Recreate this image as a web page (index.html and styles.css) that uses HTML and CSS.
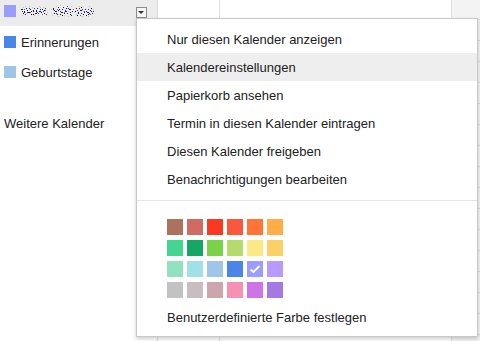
FILE: index.html
```html
<!DOCTYPE html>
<html lang="de">
<head>
  <meta charset="UTF-8">
  <title>Kalender</title>
  <link rel="stylesheet" href="styles.css">
</head>
<body>

  <div class="app">
    <!-- Seitenleiste: Meine Kalender -->
    <div class="sidebar">
      <div class="cal-row cal-row-active">
        <span class="swatch" style="background-color: #9a9cff;"></span>
        <svg class="masked-name" width="76" height="22" viewBox="20 0 76 22">
          <path fill="#1b1464" d="M21 9h2v1h-2zM24 11h1v2h-1zM26 8h1v1h-1zM28 12h2v1h-2zM30 9h1v1h-1zM33 10h1v2h-1zM35 13h2v1h-2zM37 8h1v1h-1zM39 11h2v1h-2zM42 9h1v1h-1zM44 13h1v1h-1zM53 8h1v2h-1zM55 11h2v1h-2zM57 14h1v1h-1zM59 9h1v1h-1zM61 12h2v1h-2zM63 7h1v1h-1zM65 10h1v2h-1zM67 13h1v1h-1zM69 9h2v1h-2zM72 11h1v1h-1zM76 8h1v1h-1zM78 12h1v2h-1zM80 10h2v1h-2zM83 14h1v1h-1zM85 9h1v1h-1zM87 12h2v1h-2zM90 10h1v1h-1zM92 13h1v1h-1z"/>
          <path fill="#2a2a6e" d="M22 11h1v1h-1zM25 14h1v1h-1zM27 12h1v1h-1zM29 8h1v1h-1zM31 11h1v1h-1zM34 8h1v1h-1zM36 10h1v1h-1zM38 13h1v1h-1zM40 9h1v1h-1zM43 11h1v1h-1zM45 8h1v1h-1zM46 14h1v1h-1zM54 10h1v1h-1zM56 13h1v1h-1zM58 7h1v1h-1zM60 11h1v1h-1zM62 9h1v1h-1zM64 13h1v1h-1zM66 11h1v1h-1zM68 8h1v1h-1zM70 12h1v1h-1zM71 15h1v1h-1zM77 10h1v1h-1zM79 8h1v1h-1zM81 13h1v1h-1zM82 9h1v1h-1zM84 12h1v1h-1zM86 11h1v1h-1zM88 9h1v1h-1zM89 13h1v1h-1zM91 11h1v1h-1zM93 11h1v1h-1z"/>
          <path fill="#000" d="M23 13h1v1h-1zM27 10h1v1h-1zM31 14h1v1h-1zM36 11h1v1h-1zM41 12h1v1h-1zM54 13h1v1h-1zM58 10h1v1h-1zM62 15h1v1h-1zM66 8h1v1h-1zM70 14h1v1h-1zM77 15h1v1h-1zM81 7h1v1h-1zM86 15h1v1h-1zM91 8h1v1h-1zM33 14h1v1h-1zM44 10h1v1h-1zM60 14h1v1h-1zM75 11h1v1h-1zM88 14h1v1h-1z"/>
          <path fill="#f4b183" d="M22 15h1v1h-1zM29 6h1v1h-1zM34 15h1v1h-1zM40 7h1v1h-1zM47 12h1v1h-1zM56 6h1v1h-1zM64 15h1v1h-1zM71 6h1v1h-1zM79 6h1v1h-1zM88 16h1v1h-1zM93 9h1v1h-1zM26 13h1v1h-1zM51 9h1v1h-1zM68 11h1v1h-1zM83 11h1v1h-1z"/>
          <path fill="#9ad8ea" d="M25 6h1v1h-1zM32 7h1v1h-1zM38 15h1v1h-1zM43 7h1v1h-1zM52 15h1v1h-1zM60 5h1v1h-1zM68 16h1v1h-1zM74 12h1v1h-1zM82 16h1v1h-1zM89 6h1v1h-1zM94 14h1v1h-1zM23 7h1v1h-1zM39 6h1v1h-1zM58 16h1v1h-1zM76 14h1v1h-1z"/>
          <path fill="#7a4fb0" d="M24 9h1v1h-1zM30 12h1v1h-1zM37 12h1v1h-1zM45 10h1v1h-1zM57 9h1v1h-1zM64 12h1v1h-1zM73 9h1v1h-1zM84 11h1v1h-1zM90 14h1v1h-1zM42 14h1v1h-1zM67 6h1v1h-1zM80 15h1v1h-1z"/>
        </svg>
        <span class="menu-toggle"></span>
      </div>
      <div class="cal-list">
        <div class="cal-row">
          <span class="swatch" style="background-color: #4986e7;"></span>
          <span>Erinnerungen</span>
        </div>
        <div class="cal-row">
          <span class="swatch" style="background-color: #9fc6e7;"></span>
          <span>Geburtstage</span>
        </div>
      </div>
      <div class="section-title">Weitere Kalender</div>
    </div>

    <!-- Kalenderraster im Hintergrund -->
    <div class="grid">
      <div class="col col-time"></div>
      <div class="col col-day"></div>
      <div class="col col-side"></div>
    </div>

    <!-- Kontextmenü des Kalenders -->
    <div class="cal-menu">
      <div class="menu-item">Nur diesen Kalender anzeigen</div>
      <div class="menu-item hover">Kalendereinstellungen</div>
      <div class="menu-item">Papierkorb ansehen</div>
      <div class="menu-item">Termin in diesen Kalender eintragen</div>
      <div class="menu-item">Diesen Kalender freigeben</div>
      <div class="menu-item">Benachrichtigungen bearbeiten</div>
      <div class="menu-sep"></div>
      <div class="palette">
        <span class="chip" style="background-color: #ac725e;"></span>
        <span class="chip" style="background-color: #d06b64;"></span>
        <span class="chip" style="background-color: #f83a22;"></span>
        <span class="chip" style="background-color: #fa573c;"></span>
        <span class="chip" style="background-color: #ff7537;"></span>
        <span class="chip" style="background-color: #ffad46;"></span>

        <span class="chip" style="background-color: #42d692;"></span>
        <span class="chip" style="background-color: #16a765;"></span>
        <span class="chip" style="background-color: #7bd148;"></span>
        <span class="chip" style="background-color: #b3dc6c;"></span>
        <span class="chip" style="background-color: #fbe983;"></span>
        <span class="chip" style="background-color: #fad165;"></span>

        <span class="chip" style="background-color: #92e1c0;"></span>
        <span class="chip" style="background-color: #9fe1e7;"></span>
        <span class="chip" style="background-color: #9fc6e7;"></span>
        <span class="chip" style="background-color: #4986e7;"></span>
        <span class="chip selected" style="background-color: #9a9cff;">
          <svg width="16" height="16" viewBox="0 0 16 16">
            <polyline points="3.5,8.5 6.5,11 12.5,5" fill="none" stroke="#fff" stroke-width="2"/>
          </svg>
        </span>
        <span class="chip" style="background-color: #b99aff;"></span>

        <span class="chip" style="background-color: #c2c2c2;"></span>
        <span class="chip" style="background-color: #cabdbf;"></span>
        <span class="chip" style="background-color: #cca6ac;"></span>
        <span class="chip" style="background-color: #f691b2;"></span>
        <span class="chip" style="background-color: #cd74e6;"></span>
        <span class="chip" style="background-color: #a47ae2;"></span>
      </div>
      <div class="menu-item">Benutzerdefinierte Farbe festlegen</div>
    </div>
  </div>

</body>
</html>
```

FILE: styles.css
```css
body {
  margin: 0;
  font-family: "Liberation Sans", Arial, sans-serif;
  font-size: 13px;
  color: #222;
  background-color: #fff;
}

.app {
  position: relative;
  display: flex;
  height: 341px;
  overflow: hidden;
}

/* Seitenleiste */
.sidebar {
  width: 157px;
  flex-shrink: 0;
}

.cal-row {
  display: flex;
  align-items: center;
  height: 30px;
  padding-left: 4px;
}

.cal-row-active {
  height: 22px;
  padding-bottom: 4px;
  background-color: #ececec;
}

.cal-list {
  padding-top: 1px;
}

.swatch {
  width: 12px;
  height: 12px;
  margin-right: 5px;
  flex-shrink: 0;
}

.masked-name {
  display: block;
  margin-left: -1px;
}

.menu-toggle {
  position: relative;
  box-sizing: border-box;
  width: 11px;
  height: 11px;
  margin-left: auto;
  margin-right: 10px;
  margin-top: 2px;
  border: 1px solid #8a8a8a;
  background-color: #f6f6f6;
}

.menu-toggle::after {
  content: "";
  position: absolute;
  left: 1px;
  top: 3px;
  border-left: 3.5px solid transparent;
  border-right: 3.5px solid transparent;
  border-top: 3.5px solid #333;
}

.section-title {
  margin-top: 27px;
  padding-left: 4px;
  line-height: 20px;
}

/* Raster im Hintergrund */
.grid {
  flex: 1;
  display: flex;
}

.col {
  border-left: 1px solid #e0e0e0;
}

.col-time {
  width: 61px;
}

.col-day {
  width: 231px;
}

.col-side {
  flex: 1;
  background-color: #f3f3f3;
  background-image: repeating-linear-gradient(to bottom, transparent 0, transparent 19px, #dcdcdc 19px, #dcdcdc 20px, transparent 20px, transparent 21px);
}

/* Kontextmenü */
.cal-menu {
  position: absolute;
  left: 136px;
  top: 18px;
  box-sizing: border-box;
  width: 342px;
  padding: 6px 0 5px;
  background-color: #fff;
  border: 1px solid #c8c8c8;
  box-shadow: 0 2px 4px rgba(0, 0, 0, 0.2);
}

.menu-item {
  height: 28px;
  line-height: 29px;
  padding-left: 30px;
  white-space: nowrap;
}

.menu-item.hover {
  background-color: #eeeeee;
}

.menu-sep {
  margin-top: 7px;
  border-top: 1px solid #e5e5e5;
}

.palette {
  display: grid;
  grid-template-columns: repeat(6, 16px);
  grid-auto-rows: 16px;
  column-gap: 4px;
  row-gap: 5px;
  padding: 18px 0 5px 30px;
}

.chip {
  display: block;
  width: 16px;
  height: 16px;
}

.chip svg {
  display: block;
}
```
